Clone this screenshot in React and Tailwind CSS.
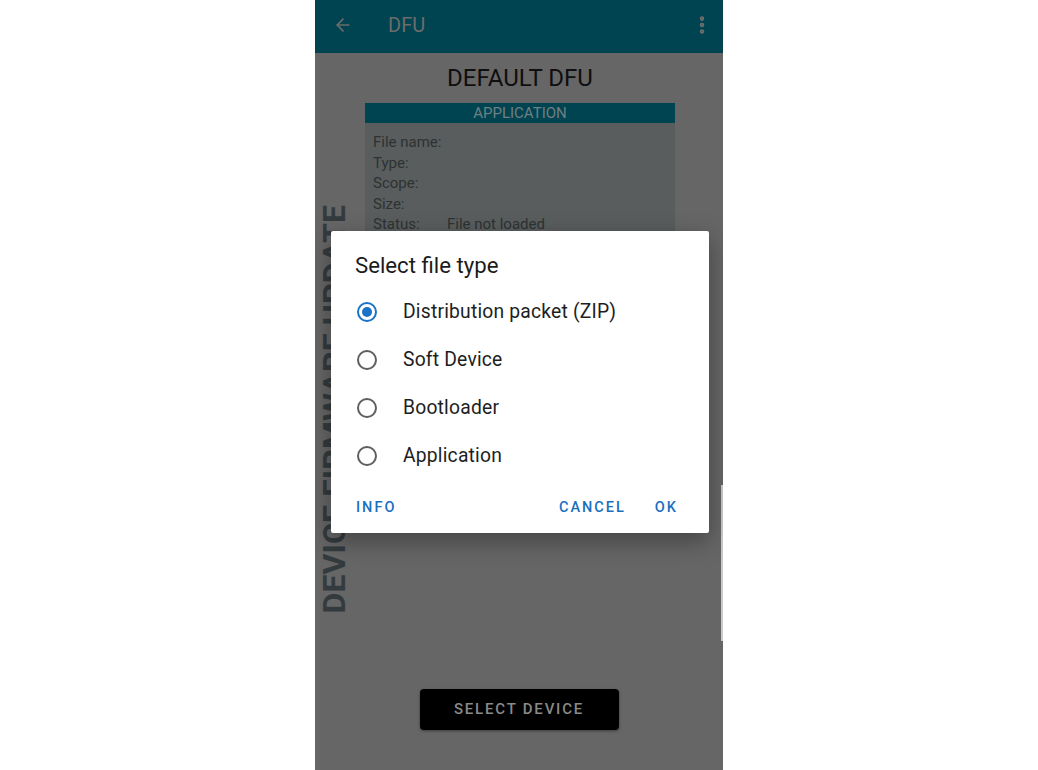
import { ArrowLeft, EllipsisVertical } from "lucide-react";

const fileRows = [
  { label: "File name:", value: "" },
  { label: "Type:", value: "" },
  { label: "Scope:", value: "" },
  { label: "Size:", value: "" },
  { label: "Status:", value: "File not loaded" },
];

const fileTypes = ["Distribution packet (ZIP)", "Soft Device", "Bootloader", "Application"];

function Radio({ checked }) {
  return (
    <span
      className={`w-[20px] h-[20px] rounded-full border-2 flex items-center justify-center shrink-0 ${
        checked ? "border-[#1a73c7]" : "border-[#5f5f5f]"
      }`}
    >
      {checked && <span className="w-[10px] h-[10px] rounded-full bg-[#1a73c7]" />}
    </span>
  );
}

export default function App() {
  return (
    <div className="w-[1038px] h-[770px] bg-white font-['Roboto',sans-serif] overflow-hidden">
      <div className="relative ml-[315px] w-[408px] h-[770px] bg-[#666666] overflow-hidden flex flex-col">
        {/* toolbar */}
        <div className="h-[53px] bg-[#004451] flex items-center px-[18px] pb-[4px] shrink-0">
          <ArrowLeft className="w-[20px] h-[20px] text-[#6b6b6b]" strokeWidth={2} />
          <span className="ml-[35px] text-[20px] text-[#6c6c6c] leading-none">DFU</span>
          <EllipsisVertical className="ml-auto -mr-[8px] w-[22px] h-[22px] text-[#6c6c6c]" strokeWidth={3} />
        </div>

        {/* body */}
        <div className="flex-1 grid grid-cols-[40px_1fr_40px]">
          <div className="pt-[152px] pl-[5px]">
            <div className="[writing-mode:vertical-rl] rotate-180 text-[32px] font-bold leading-[28px] text-[#343b3e] tracking-[0.1px] whitespace-nowrap">
              DEVICE FIRMWARE UPDATE
            </div>
          </div>

          <div className="flex flex-col items-center">
            <h1 className="mt-[10px] ml-[2px] text-[24px] leading-[30px] text-[#0f0f0f]">DEFAULT DFU</h1>

            <div className="mt-[10px] ml-[2px] w-[310px] h-[200px] bg-[#595d5d]">
              <div className="h-[20px] bg-[#004451] text-center text-[15px] leading-[20px] text-[#6f7f83]">
                APPLICATION
              </div>
              <div className="pl-[8px] pt-[9px] text-[15px] text-[#2e3232]">
                {fileRows.map(({ label, value }) => (
                  <div key={label} className="flex h-[20.5px] leading-[20.5px]">
                    <span className="w-[74px]">{label}</span>
                    <span>{value}</span>
                  </div>
                ))}
              </div>
            </div>

            <div className="mt-auto mb-[40px]">
              <button className="w-[199px] h-[41px] rounded-[4px] bg-black text-[15px] font-medium tracking-[1.8px] text-[#8a8a8a] shadow-[0_1px_3px_rgba(0,0,0,0.4)]">
                SELECT DEVICE
              </button>
            </div>
          </div>

          <div />
        </div>

        {/* scroll indicator */}
        <div className="absolute right-0 top-[485px] w-[2px] h-[156px] bg-[#c9c9c9]" />

        {/* dialog */}
        <div className="absolute inset-0 flex items-start justify-center pt-[231px] pl-[2px]">
          <div className="w-[378px] h-[302px] bg-white rounded-[2px] shadow-[0_8px_24px_rgba(0,0,0,0.35)] flex flex-col pt-[22px]">
            <div className="px-[24px] text-[22.2px] leading-[24px] text-[#1b1b1b]">Select file type</div>
            <ul className="mt-[11px]">
              {fileTypes.map((t, i) => (
                <li key={t} className="h-[48px] flex items-center pl-[26px]">
                  <Radio checked={i === 0} />
                  <span className="ml-[26px] text-[19.3px] tracking-[0.2px] text-[#1e1e1e]">{t}</span>
                </li>
              ))}
            </ul>
            <div className="mt-[10px] h-[36px] flex items-center px-[25px] text-[14.5px] font-medium tracking-[2px] text-[#1a6fbf]">
              <span>INFO</span>
              <span className="ml-auto">CANCEL</span>
              <span className="ml-[29px] mr-[6px]">OK</span>
            </div>
          </div>
        </div>
      </div>
    </div>
  );
}
